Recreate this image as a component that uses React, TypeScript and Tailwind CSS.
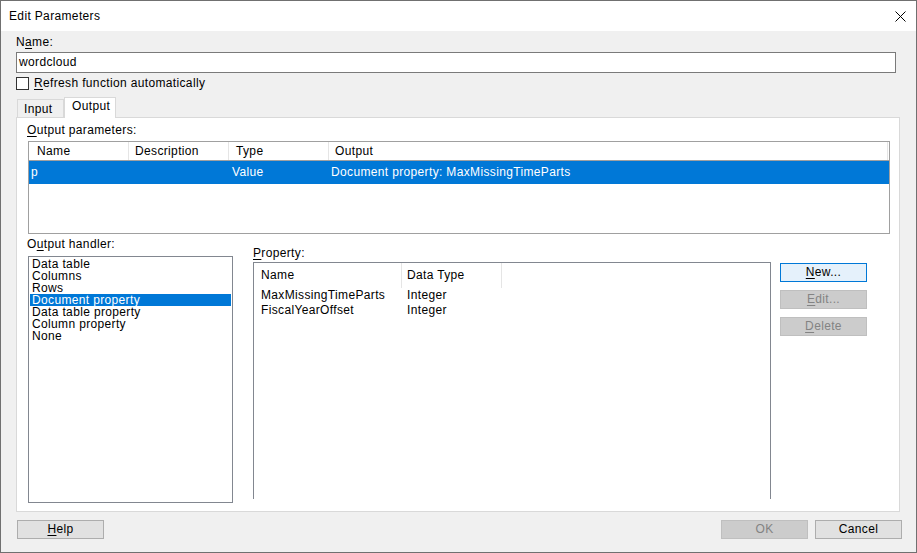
import React from "react";

const font =
  "font-['Liberation_Sans',Arial,sans-serif] text-[12px] leading-[15px] tracking-[0.35px] text-black";

function U({ children }: { children: React.ReactNode }) {
  return <span className="underline underline-offset-2">{children}</span>;
}

function Btn({
  children,
  variant = "normal",
  className = "",
}: {
  children: React.ReactNode;
  variant?: "normal" | "default" | "disabled";
  className?: string;
}) {
  const styles = {
    normal: "bg-[#e1e1e1] border-[#adadad] text-black",
    default: "bg-[#e5f1fb] border-[#0078d7] text-black",
    disabled: "bg-[#cccccc] border-[#bfbfbf] text-[#838383]",
  }[variant];
  return (
    <div
      className={`flex h-[19px] w-[87px] items-center justify-center border ${styles} ${className}`}
    >
      {children}
    </div>
  );
}

const handlers = [
  "Data table",
  "Columns",
  "Rows",
  "Document property",
  "Data table property",
  "Column property",
  "None",
];

export default function App() {
  return (
    <div className={`${font} flex h-[553px] w-[917px] flex-col border border-[#707070] bg-[#f0f0f0]`}>
      {/* title bar */}
      <div className="flex h-[30px] items-center justify-between bg-white pl-[8px] pr-[10px]">
        <span>Edit Parameters</span>
        <svg width="11" height="11" viewBox="0 0 11 11">
          <path d="M0.5 0.5 L10.5 10.5 M10.5 0.5 L0.5 10.5" stroke="#000" strokeWidth="1" />
        </svg>
      </div>

      <div className="flex flex-col pl-[15px]">
        <div className="mt-[4px] h-[15px]">
          N<U>a</U>me:
        </div>
        <div className="mt-[2px] flex h-[21px] w-[880px] items-center border border-[#7a7a7a] bg-white pl-[2px]">
          wordcloud
        </div>
        <div className="mt-[4px] flex h-[13px] items-center gap-[5px]">
          <div className="h-[13px] w-[13px] border border-[#333333] bg-white" />
          <span>
            <U>R</U>efresh function automatically
          </span>
        </div>

        {/* tabs */}
        <div className="mt-[7px] flex h-[20px] items-end pl-[1px]">
          <div className="flex h-[18px] w-[47px] items-center border border-b-0 border-[#d9d9d9] pl-[6px] pt-[2px]">
            Input
          </div>
          <div className="relative top-[1px] flex h-[21px] w-[52px] items-start border border-b-0 border-[#d9d9d9] bg-white pl-[7px] pt-[1px]">
            Output
          </div>
        </div>

        {/* tab panel */}
        <div className="flex h-[395px] w-[884px] flex-col border border-[#d9d9d9] bg-white pl-[10px] pt-[5px]">
          <div className="h-[15px]">
            <U>O</U>utput parameters:
          </div>
          <div className="ml-[1px] mt-[3px] flex h-[93px] w-[862px] flex-col border border-[#a0a0a0]">
            <div className="flex h-[19px] items-center border-b border-[#a0a0a0]">
              <div className="h-full w-[100px] border-r border-[#e5e5e5] pl-[8px] pt-[2px]">Name</div>
              <div className="h-full w-[100px] border-r border-[#e5e5e5] pl-[6px] pt-[2px]">Description</div>
              <div className="h-full w-[100px] border-r border-[#e5e5e5] pl-[7px] pt-[2px]">Type</div>
              <div className="h-full w-[559px] border-r border-[#e5e5e5] pl-[6px] pt-[2px]">Output</div>
            </div>
            <div className="flex h-[23px] items-center bg-[#0078d7] text-white">
              <div className="w-[100px] pl-[2px]">p</div>
              <div className="w-[100px]" />
              <div className="w-[100px] pl-[3px]">Value</div>
              <div className="pl-[2px]">Document property: MaxMissingTimeParts</div>
            </div>
          </div>

          <div className="mt-[3px] flex items-start">
            {/* output handler */}
            <div className="flex flex-col">
              <div className="h-[15px]">
                O<U>u</U>tput handler:
              </div>
              <div className="ml-[1px] mt-[4px] flex h-[247px] w-[205px] flex-col border border-[#828790] p-[1px] leading-[12px]">
                {handlers.map((h) => (
                  <div
                    key={h}
                    className={`h-[12px] pl-[2px] ${h === "Document property" ? "bg-[#0078d7] text-white" : ""}`}
                  >
                    {h}
                  </div>
                ))}
              </div>
            </div>

            {/* property */}
            <div className="ml-[20px] flex flex-col pt-[9px]">
              <div className="h-[15px]">
                <U>P</U>roperty:
              </div>
              <div className="mt-[1px] flex h-[237px] w-[518px] flex-col border border-b-0 border-[#828790]">
                <div className="flex h-[25px] items-center">
                  <div className="flex h-full w-[148px] items-center border-r border-[#e5e5e5] pl-[7px]">Name</div>
                  <div className="flex h-full w-[100px] items-center border-r border-[#e5e5e5] pl-[5px]">Data Type</div>
                </div>
                {[
                  ["MaxMissingTimeParts", "Integer"],
                  ["FiscalYearOffset", "Integer"],
                ].map(([n, t]) => (
                  <div key={n} className="flex h-[15px] items-center">
                    <div className="w-[148px] pl-[7px]">{n}</div>
                    <div className="pl-[5px]">{t}</div>
                  </div>
                ))}
              </div>
            </div>

            {/* buttons */}
            <div className="ml-[9px] flex flex-col gap-[8px] pt-[26px]">
              <Btn variant="default">
                <span>
                  <U>N</U>ew...
                </span>
              </Btn>
              <Btn variant="disabled">
                <span>
                  <U>E</U>dit...
                </span>
              </Btn>
              <Btn variant="disabled">
                <span>
                  <U>D</U>elete
                </span>
              </Btn>
            </div>
          </div>
        </div>

        {/* footer */}
        <div className="mt-[8px] flex w-[886px] items-center">
          <Btn className="ml-[1px]">
            <span>
              <U>H</U>elp
            </span>
          </Btn>
          <div className="flex-1" />
          <Btn variant="disabled">OK</Btn>
          <Btn className="ml-[7px]">Cancel</Btn>
        </div>
      </div>
    </div>
  );
}
